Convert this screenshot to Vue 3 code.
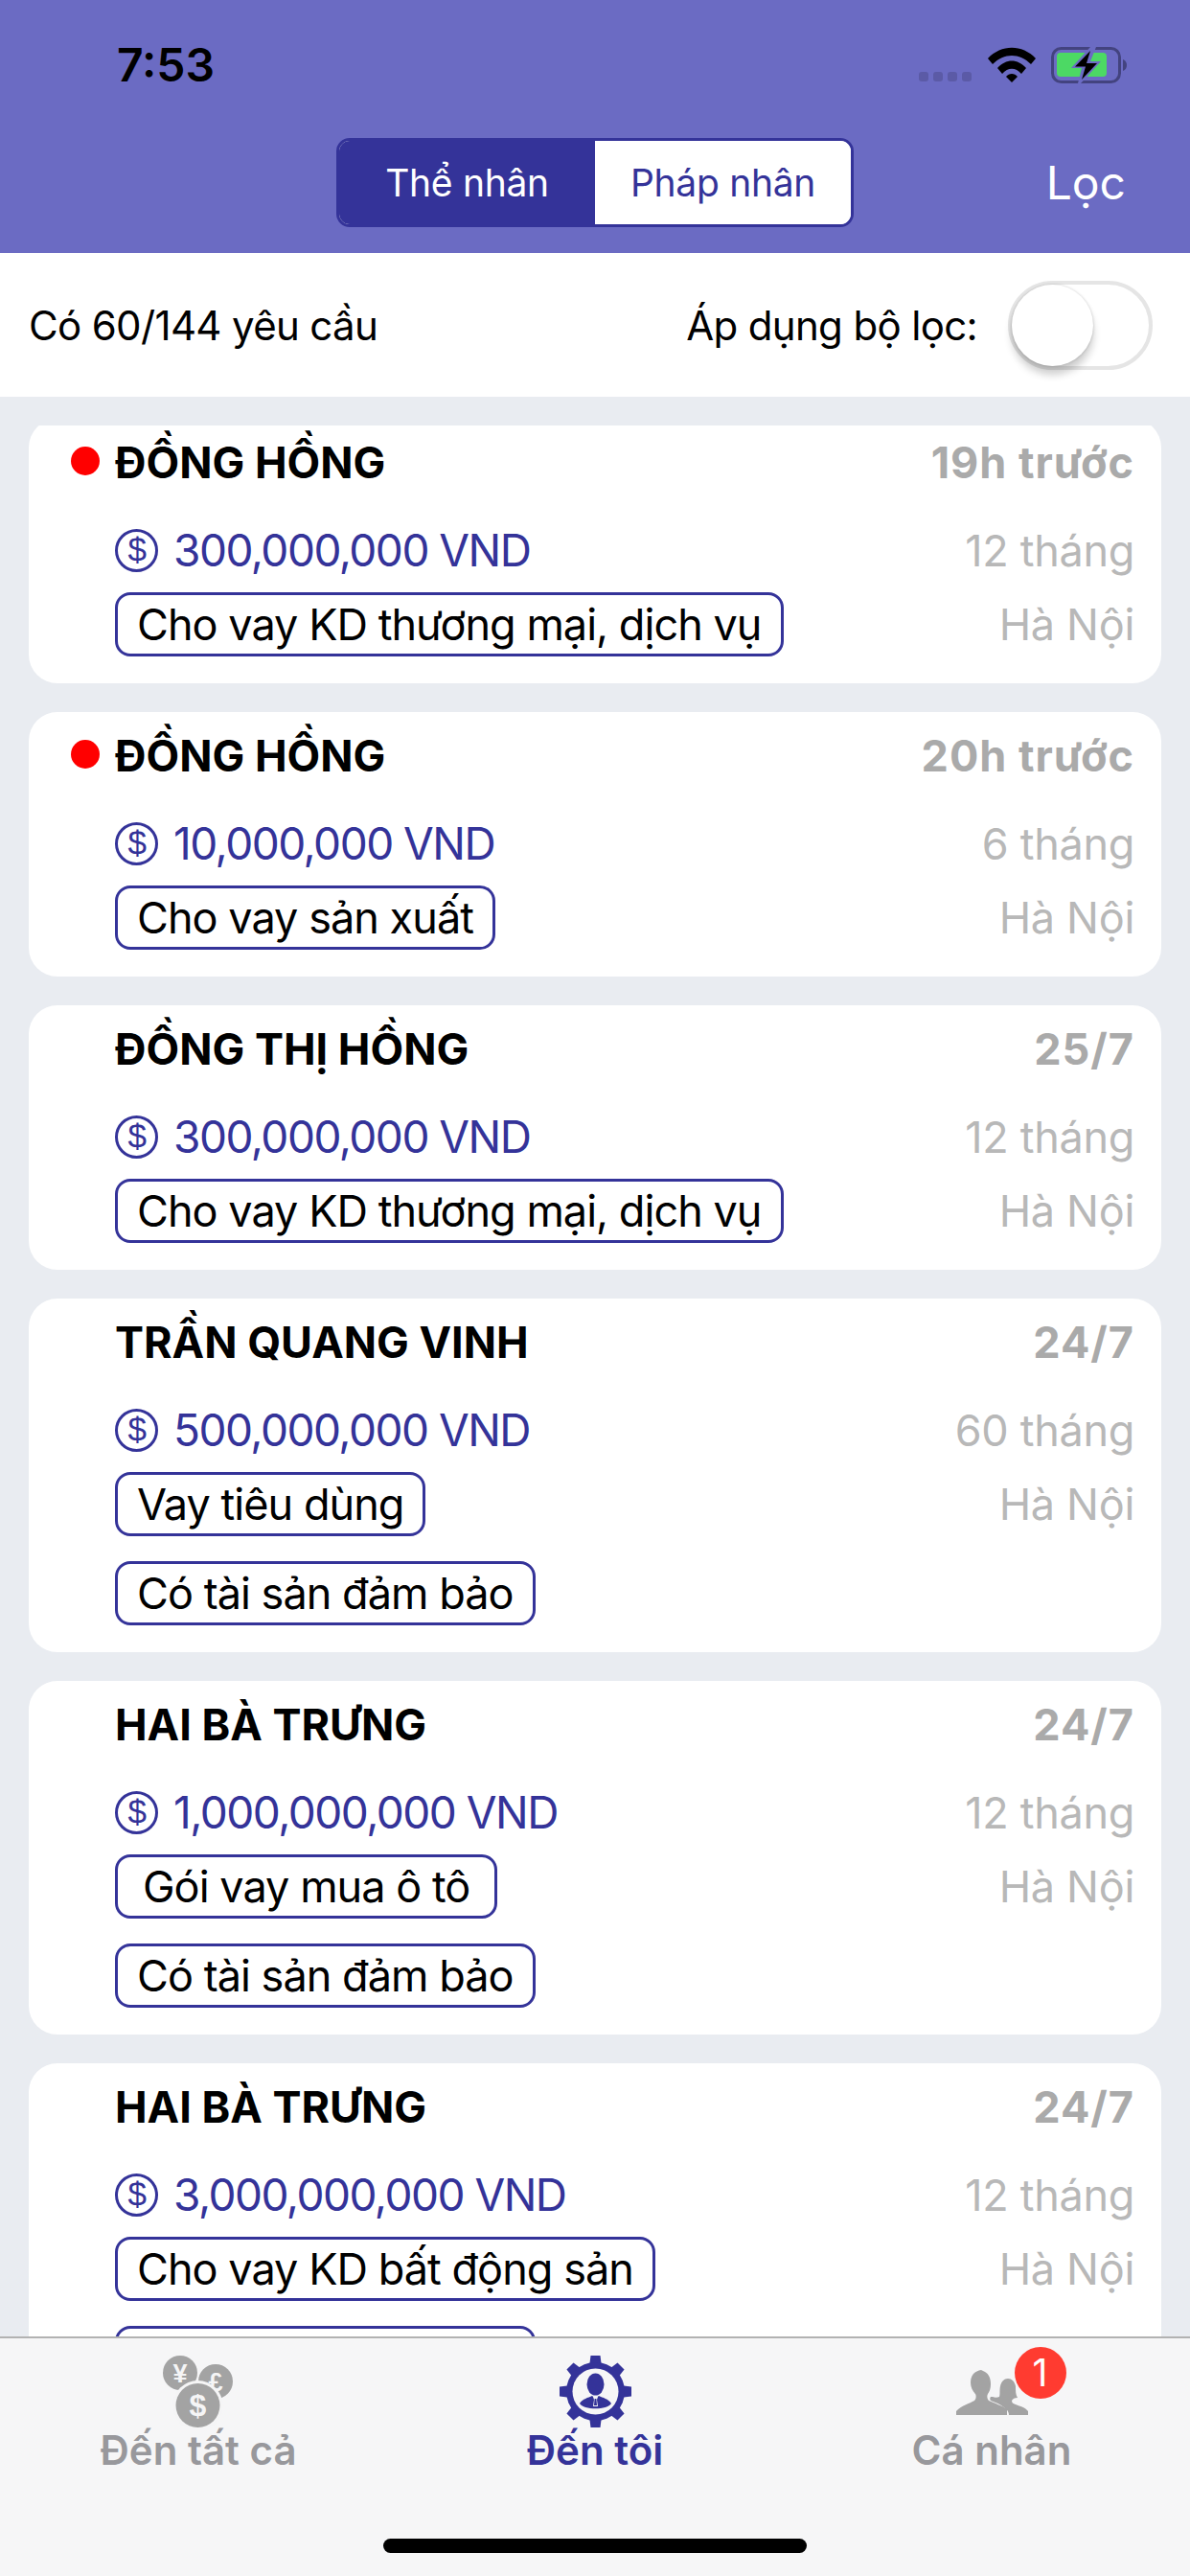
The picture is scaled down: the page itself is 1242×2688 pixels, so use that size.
<template>
  <div class="screen">
    <header class="top">
      <div class="status">
        <span class="clock">7:53</span>
        <div class="status-icons">
          <div class="signal"><i v-for="n in 4" :key="n"></i></div>
          <svg class="wifi" viewBox="0 0 50 37">
            <path d="M0 12 C14 -3 36 -3 50 12 L45 18 C33 6 17 6 5 18 Z" />
            <path d="M10 22 C19 12 31 12 40 22 L35 28 C29 21 21 21 15 28 Z" />
            <path d="M19 31 C22 27 28 27 31 31 L25 37 Z" />
          </svg>
          <svg class="battery" viewBox="0 0 80 38">
            <rect x="1.5" y="1.5" width="70" height="35" rx="9" fill="none" stroke="#43437f" stroke-width="3" />
            <rect x="6" y="6" width="52" height="25" rx="4" fill="#4cd964" />
            <path d="M75 13 C78 14 79 17 79 19 C79 21 78 24 75 25 Z" fill="#43437f" />
            <path d="M41 0 L21 22 H32 L28 38 H31 L52 15 H41 L47 0 Z" fill="#6b6bc3" />
            <path d="M41 4 L25 20.5 H36 L32 34 L48 17 H37 Z" fill="#000" />
          </svg>
        </div>
      </div>
      <nav class="nav">
        <span></span>
        <div class="segment">
          <button class="seg on">Thể nhân</button>
          <button class="seg">Pháp nhân</button>
        </div>
        <span class="filter-link">Lọc</span>
      </nav>
    </header>

    <section class="filter">
      <span>Có 60/144 yêu cầu</span>
      <div class="filter-right">
        <span>Áp dụng bộ lọc:</span>
        <div class="toggle"><div class="knob"></div></div>
      </div>
    </section>

    <main class="list">
      <article v-for="(r, i) in requests" :key="i" class="card">
        <div class="row title-row">
          <h3 class="name">
            <span v-if="r.unread" class="dot"></span>
            {{ r.name }}
          </h3>
          <span class="when">{{ r.when }}</span>
        </div>
        <div class="row amount-row">
          <div class="amount">
            <svg class="coin" viewBox="0 0 45 45">
              <circle cx="22.5" cy="22.5" r="21" fill="none" stroke="#343399" stroke-width="3" />
              <text x="22.5" y="34" text-anchor="middle" class="coin-sign">$</text>
            </svg>
            {{ r.amount }}
          </div>
          <span class="muted">{{ r.term }}</span>
        </div>
        <div class="row tags-row">
          <div class="tags">
            <span v-for="t in r.tags" :key="t" class="tag" :class="{ wide: t.startsWith('Gói') }">{{ t }}</span>
          </div>
          <span class="muted place">Hà Nội</span>
        </div>
      </article>
    </main>

    <footer class="tabbar">
      <div class="tabs">
        <div class="tab">
          <div class="tab-icon">
            <svg width="75" height="75" viewBox="0 0 75 75">
              <circle cx="18" cy="18" r="18" fill="#a3a3a3" />
              <circle cx="55" cy="27" r="18" fill="#a3a3a3" />
              <text x="18" y="28" text-anchor="middle" class="money small">¥</text>
              <text x="55" y="37" text-anchor="middle" class="money small">£</text>
              <circle cx="36.5" cy="52" r="26" fill="#f5f5f6" />
              <circle cx="36.5" cy="52" r="23" fill="#a3a3a3" />
              <text x="36.5" y="63" text-anchor="middle" class="money">$</text>
            </svg>
          </div>
          <span class="tab-label">Đến tất cả</span>
        </div>
        <div class="tab active">
          <div class="tab-icon">
            <svg width="75" height="75" viewBox="0 0 75 75">
              <g fill="#343399">
                <path v-for="a in [0, 45, 90, 135, 180, 225, 270, 315]" :key="a"
                  d="M32.5 0 H42.5 L44 12 H31 Z" :transform="`rotate(${a} 37.5 37.5)`" />
                <circle cx="37.5" cy="37.5" r="30.5" />
              </g>
              <circle cx="37.5" cy="37.5" r="24" fill="#f6f6f7" />
              <ellipse cx="37.5" cy="30" rx="9" ry="11.5" fill="#343399" />
              <path d="M21 50 C24 45 30 44 34 42 L37.5 45 L41 42 C45 44 51 45 54 50 C50 57 25 57 21 50 Z" fill="#343399" />
              <path d="M35 43 H40 L39 46 L40 53 H35 L36 46 Z" fill="#f6f6f7" />
              <path d="M36.6 45 H38.4 L39 52 H36 Z" fill="#343399" />
            </svg>
          </div>
          <span class="tab-label">Đến tôi</span>
        </div>
        <div class="tab">
          <div class="tab-icon">
            <div class="people">
              <svg width="75" height="48" viewBox="0 0 75 48">
                <path d="M26 1 L30 3 C34 5 36 10 36 16 C36 20 35 23 33 26 C32 28 32 31 34 33 C40 36 48 38 53 42 L53 48 H0 V44 C5 38 14 36 19 33 C21 31 21 28 20 26 C17 23 15 19 15 14 C15 6 20 2 26 1 Z" fill="#a3a3a3" />
                <path d="M47 38 C42 35 38 34 36 33 C35 32 35 30 36 29 L38 29 C40 30 43 30 45 29 C46 27 45 22 46 18 C47 13 50 10 54 10 C58 10 61 13 62 18 C62 23 62 27 64 30 C61 30 59 31 58 33 C58 35 59 36 62 37 C67 39 72 40 75 44 V48 H55 C55 44 52 41 47 38 Z" fill="#a3a3a3" />
              </svg>
              <span class="badge">1</span>
            </div>
          </div>
          <span class="tab-label">Cá nhân</span>
        </div>
      </div>
      <div class="home"></div>
    </footer>
  </div>
</template>

<script setup>
const requests = [
  { name: 'ĐỒNG HỒNG', when: '19h trước', amount: '300,000,000 VND', term: '12 tháng', unread: true, tags: ['Cho vay KD thương mại, dịch vụ'] },
  { name: 'ĐỒNG HỒNG', when: '20h trước', amount: '10,000,000 VND', term: '6 tháng', unread: true, tags: ['Cho vay sản xuất'] },
  { name: 'ĐỒNG THỊ HỒNG', when: '25/7', amount: '300,000,000 VND', term: '12 tháng', tags: ['Cho vay KD thương mại, dịch vụ'] },
  { name: 'TRẦN QUANG VINH', when: '24/7', amount: '500,000,000 VND', term: '60 tháng', tags: ['Vay tiêu dùng', 'Có tài sản đảm bảo'] },
  { name: 'HAI BÀ TRƯNG', when: '24/7', amount: '1,000,000,000 VND', term: '12 tháng', tags: ['Gói vay mua ô tô', 'Có tài sản đảm bảo'] },
  { name: 'HAI BÀ TRƯNG', when: '24/7', amount: '3,000,000,000 VND', term: '12 tháng', tags: ['Cho vay KD bất động sản', 'Có tài sản đảm bảo'] }
]
</script>

<style>
html, body { margin: 0; background: #e9ecf1; }
</style>

<style scoped>
.screen {
  width: 1242px;
  height: 2688px;
  display: flex;
  flex-direction: column;
  overflow: hidden;
  background: #e9ecf1;
  font-family: Inter, "Noto Sans", sans-serif;
  color: #000;
}

.top {
  height: 264px;
  flex: none;
  background: #6b6bc3;
}
.status {
  height: 136px;
  display: flex;
  justify-content: space-between;
  padding: 46px 65px 0 122px;
  box-sizing: border-box;
}
.clock {
  font-size: 48px;
  font-weight: 600;
  line-height: 44px;
}
.status-icons {
  display: flex;
  align-items: flex-start;
  height: 40px;
  margin-top: 3px;
}
.signal {
  display: flex;
  gap: 5px;
  margin-top: 26px;
  margin-right: 17px;
}
.signal i {
  width: 10px;
  height: 10px;
  border-radius: 3px;
  background: #5b5aa6;
}
.wifi { width: 50px; height: 37px; margin-right: 16px; }
.battery { width: 80px; height: 38px; }

.nav {
  display: grid;
  grid-template-columns: 1fr auto 1fr;
  align-items: center;
  height: 101px;
  margin-top: 4px;
}
.segment {
  display: flex;
  width: 540px;
  height: 93px;
  box-sizing: border-box;
  border: 3px solid #343399;
  border-radius: 14px;
  overflow: hidden;
  background: #fff;
}
.seg {
  flex: 1;
  border: 0;
  padding: 0;
  background: #fff;
  color: #343399;
  font: 400 39px Inter, sans-serif;
  letter-spacing: -0.3px;
}
.seg.on { background: #343399; color: #fff; }
.filter-link {
  justify-self: end;
  padding-right: 67px;
  color: #fff;
  font-size: 48px;
}

.filter {
  flex: none;
  height: 150px;
  display: flex;
  align-items: center;
  justify-content: space-between;
  padding: 0 39px 0 30px;
  background: #fff;
  font-size: 42px;
  letter-spacing: -0.65px;
}
.filter-right {
  display: flex;
  align-items: center;
  gap: 32px;
}
.toggle {
  position: relative;
  width: 151px;
  height: 93px;
  box-sizing: border-box;
  border: 4px solid #e5e5e5;
  border-radius: 47px;
  background: #fff;
}
.knob {
  position: absolute;
  left: 0;
  top: 0;
  width: 85px;
  height: 85px;
  border-radius: 50%;
  background: #fff;
  box-shadow: 0 9px 9px rgba(0, 0, 0, 0.2), 0 0 3px rgba(0, 0, 0, 0.2);
}

.list {
  flex: 1;
  min-height: 0;
  margin-top: 30px;
  padding: 0 30px;
  overflow: hidden;
}
.card {
  padding: 18px 28px 28px 90px;
  margin-bottom: 30px;
  border-radius: 30px;
  background: #fff;
}
.card:first-child { margin-top: -7px; }
.row {
  display: flex;
  justify-content: space-between;
}
.title-row {
  align-items: center;
  height: 54px;
  margin-bottom: 38px;
}
.name {
  position: relative;
  margin: 0;
  font-size: 45px;
  font-weight: 700;
}
.dot {
  position: absolute;
  left: -46px;
  top: 11px;
  width: 30px;
  height: 30px;
  border-radius: 50%;
  background: #f00;
}
.when {
  color: #aaa;
  font-size: 45px;
  font-weight: 700;
  letter-spacing: 1px;
}
.amount-row {
  align-items: center;
  height: 54px;
  margin-bottom: 17px;
}
.amount {
  display: flex;
  align-items: center;
  gap: 16px;
  color: #343399;
  font-size: 46px;
  letter-spacing: -1.5px;
}
.coin { width: 45px; height: 45px; }
.coin-sign {
  font-family: "Liberation Sans", sans-serif;
  font-size: 35px;
  fill: #343399;
}
.muted {
  color: #b8b8b8;
  font-size: 45px;
  letter-spacing: -0.3px;
}
.tags {
  display: flex;
  flex-direction: column;
  align-items: flex-start;
  gap: 26px;
}
.tag {
  height: 67px;
  box-sizing: border-box;
  display: flex;
  align-items: center;
  padding: 0 20px;
  border: 3px solid #343399;
  border-radius: 16px;
  font-size: 45px;
  letter-spacing: -0.95px;
}
.tag.wide { padding: 0 26px; }
.place { line-height: 67px; }

.tabbar {
  position: relative;
  flex: none;
  height: 250px;
  box-sizing: border-box;
  border-top: 2px solid #b2b2b2;
  background: #f6f6f7;
}
.tabs {
  display: grid;
  grid-template-columns: repeat(3, 1fr);
  padding-top: 18px;
}
.tab {
  display: flex;
  flex-direction: column;
  align-items: center;
  color: #98989c;
}
.tab.active { color: #343399; }
.tab-icon {
  height: 75px;
  margin-bottom: 3px;
  display: flex;
  align-items: center;
}
.tab-label {
  font-size: 42px;
  line-height: 42px;
  font-weight: 600;
}
.money {
  font-family: "Liberation Sans", sans-serif;
  font-weight: 700;
  font-size: 32px;
  fill: #f5f5f6;
}
.money.small { font-size: 27px; }
.people {
  position: relative;
  height: 48px;
}
.badge {
  position: absolute;
  left: 61px;
  top: -23px;
  width: 54px;
  height: 54px;
  border-radius: 50%;
  background: #ff3b30;
  color: #fff;
  font-size: 39px;
  line-height: 54px;
  text-align: center;
}
.home {
  position: absolute;
  left: 400px;
  bottom: 24px;
  width: 442px;
  height: 15px;
  border-radius: 8px;
  background: #000;
}
</style>
